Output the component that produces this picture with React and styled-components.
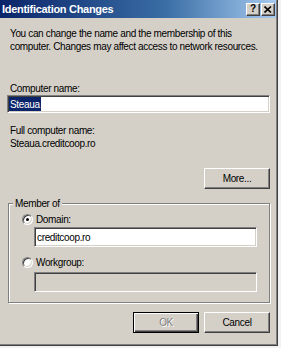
import React from "react";
import styled, { createGlobalStyle } from "styled-components";

const face = "#d4d0c8";

const GlobalStyle = createGlobalStyle`
  html, body {
    margin: 0;
    padding: 0;
    background: #f2f2f2;
  }
  body {
    font-family: "Liberation Sans", Arial, sans-serif;
    font-size: 10px;
    letter-spacing: -0.35px;
    color: #000;
  }
`;

const Window = styled.div`
  box-sizing: border-box;
  width: 278px;
  height: 346px;
  background: ${face};
  border-right: 1px solid #404040;
  border-bottom: 1px solid #404040;
  padding: 0 1px 1px 0;
  box-shadow: inset -1px -1px 0 #808080;
  display: flex;
  flex-direction: column;
`;

const TitleBar = styled.div`
  height: 18px;
  display: flex;
  align-items: center;
  padding: 0 1px 0 2px;
  background: linear-gradient(to right, #0a246a, #3a6ea5 60%, #a6caf0);
`;

const Title = styled.span`
  flex: 1;
  color: #fff;
  font-weight: bold;
  font-size: 11px;
  letter-spacing: -0.3px;
  line-height: 18px;
`;

const CapButton = styled.div`
  box-sizing: border-box;
  width: 14px;
  height: 13px;
  margin-left: ${({ $gap }) => $gap || 0}px;
  background: ${face};
  border-top: 1px solid #fff;
  border-left: 1px solid #fff;
  border-right: 1px solid #404040;
  border-bottom: 1px solid #404040;
  box-shadow: inset -1px -1px 0 #808080;
  display: flex;
  align-items: center;
  justify-content: center;
  font-weight: bold;
  font-size: 10px;
  line-height: 1;
  letter-spacing: 0;
`;

const Body = styled.div`
  flex: 1;
  display: flex;
  flex-direction: column;
  padding: 9px 6px 0 7px;
`;

const Text = styled.div`
  margin: ${({ $top }) => $top || 0}px 0 0 3px;
  line-height: 13px;
  white-space: nowrap;
`;

const Field = styled.div`
  box-sizing: border-box;
  height: ${({ $h }) => $h || 20}px;
  margin-top: ${({ $top }) => $top || 0}px;
  background: ${({ $disabled }) => ($disabled ? face : "#fff")};
  border-top: 1px solid #808080;
  border-left: 1px solid #808080;
  border-right: 1px solid #fff;
  border-bottom: 1px solid #fff;
  box-shadow: inset 1px 1px 0 #404040, inset -1px -1px 0 ${face};
  padding: 0 2px 0 2px;
  display: flex;
  align-items: center;
  line-height: 13px;
  white-space: nowrap;
`;

const Selected = styled.span`
  background: #0a246a;
  color: #fff;
  padding: 1px 1px 0 1px;
  margin-left: -1px;
`;

const Button = styled.div`
  box-sizing: border-box;
  width: 66px;
  height: 21px;
  background: ${face};
  border-top: 1px solid #fff;
  border-left: 1px solid #fff;
  border-right: 1px solid #404040;
  border-bottom: 1px solid #404040;
  box-shadow: inset -1px -1px 0 #808080;
  display: flex;
  align-items: center;
  justify-content: center;
  color: ${({ $disabled }) => ($disabled ? "#808080" : "#000")};
  text-shadow: ${({ $disabled }) => ($disabled ? "1px 1px 0 #fff" : "none")};
  outline: ${({ $default }) => ($default ? "1px solid #000" : "none")};
  outline-offset: 0;
`;

const DefaultButton = styled(Button)`
  border: 1px solid #000;
  box-shadow: inset 1px 1px 0 #fff, inset -1px -1px 0 #404040,
    inset -2px -2px 0 #808080;
  outline: none;
`;

const MoreRow = styled.div`
  display: flex;
  justify-content: flex-end;
  margin-top: 18px;
`;

const Group = styled.fieldset`
  margin: 8px 0 0 1px;
  padding: 0;
  min-width: 0;
  border: 1px solid #808080;
  box-shadow: inset 1px 1px 0 #fff, 1px 1px 0 #fff;
`;

const Legend = styled.legend`
  margin-left: 4px;
  padding: 0 2px;
  line-height: 13px;
  background: ${face};
`;

const GroupInner = styled.div`
  display: flex;
  flex-direction: column;
  padding: 3px 12px 10px 13px;
`;

const RadioRow = styled.div`
  display: flex;
  align-items: center;
  gap: 3px;
  height: 13px;
  margin-top: ${({ $top }) => $top || 0}px;
  line-height: 13px;
`;

const Radio = styled.span`
  box-sizing: border-box;
  position: relative;
  width: 11px;
  height: 11px;
  border-radius: 50%;
  background: #fff;
  border: 1px solid;
  border-color: #808080 #fff #fff #808080;
  box-shadow: inset 1px 1px 0 #404040, inset -1px -1px 0 ${face};

  &::after {
    content: "";
    display: ${({ $checked }) => ($checked ? "block" : "none")};
    position: absolute;
    left: 3px;
    top: 3px;
    width: 3px;
    height: 3px;
    border-radius: 50%;
    background: #000;
  }
`;

const Indented = styled.div`
  margin-left: 12px;
`;

const ButtonRow = styled.div`
  display: flex;
  justify-content: flex-end;
  gap: 5px;
  margin-top: 9px;
`;

export default function App() {
  return (
    <>
      <GlobalStyle />
      <Window>
        <TitleBar>
          <Title>Identification Changes</Title>
          <CapButton>?</CapButton>
          <CapButton $gap={1}>
            <svg width="8" height="7" viewBox="0 0 8 7">
              <path d="M0.5 0.5 L7 6.5 M7 0.5 L0.5 6.5" stroke="#000" strokeWidth="1.6" />
            </svg>
          </CapButton>
        </TitleBar>
        <Body>
          <Text>
            You can change the name and the membership of this
            <br />
            computer. Changes may affect access to network resources.
          </Text>
          <Text $top={29}>Computer name:</Text>
          <Field $h={18}>
            <Selected>Steaua</Selected>
          </Field>
          <Text $top={11}>Full computer name:</Text>
          <Text>Steaua.creditcoop.ro</Text>
          <MoreRow>
            <Button>More...</Button>
          </MoreRow>
          <Group>
            <Legend>Member of</Legend>
            <GroupInner>
              <RadioRow>
                <Radio $checked />
                Domain:
              </RadioRow>
              <Indented>
                <Field $top={1}>creditcoop.ro</Field>
              </Indented>
              <RadioRow $top={9}>
                <Radio />
                Workgroup:
              </RadioRow>
              <Indented>
                <Field $top={3} $disabled />
              </Indented>
            </GroupInner>
          </Group>
          <ButtonRow>
            <DefaultButton $disabled>OK</DefaultButton>
            <Button>Cancel</Button>
          </ButtonRow>
        </Body>
      </Window>
    </>
  );
}
